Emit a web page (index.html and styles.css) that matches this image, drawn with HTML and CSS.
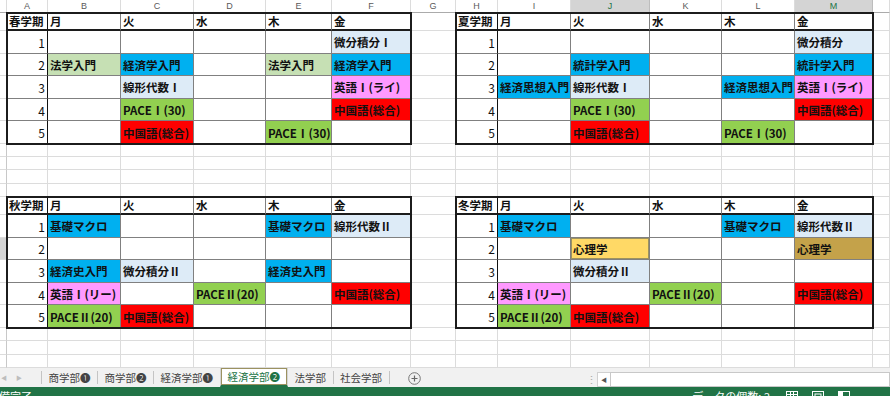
FILE: index.html
```html
<!DOCTYPE html>
<html lang="ja">
<head>
<meta charset="utf-8">
<title>時間割</title>
<link rel="stylesheet" href="styles.css">
</head>
<body>
<div class="app">
<div class="sheet">
  <!-- column header row -->
  <div class="ch"></div><div class="ch">A</div><div class="ch">B</div><div class="ch">C</div><div class="ch">D</div><div class="ch">E</div><div class="ch">F</div><div class="ch">G</div><div class="ch">H</div><div class="ch">I</div><div class="ch sel">J</div><div class="ch">K</div><div class="ch">L</div><div class="ch sel">M</div><div class="ch"></div>
  <!-- rows beside the upper tables -->
  <div class="rh"></div><div class="g"></div><div class="g"></div>
  <div class="rh"></div><div class="g"></div><div class="g"></div>
  <div class="rh"></div><div class="g"></div><div class="g"></div>
  <div class="rh"></div><div class="g"></div><div class="g"></div>
  <div class="rh"></div><div class="g"></div><div class="g"></div>
  <div class="rh"></div><div class="g"></div><div class="g"></div>
  <!-- empty rows -->
  <div class="rh"></div><div class="g"></div><div class="g"></div><div class="g"></div><div class="g"></div><div class="g"></div><div class="g"></div><div class="g"></div><div class="g"></div><div class="g"></div><div class="g"></div><div class="g"></div><div class="g"></div><div class="g"></div><div class="g"></div>
  <div class="rh"></div><div class="g"></div><div class="g"></div><div class="g"></div><div class="g"></div><div class="g"></div><div class="g"></div><div class="g"></div><div class="g"></div><div class="g"></div><div class="g"></div><div class="g"></div><div class="g"></div><div class="g"></div><div class="g"></div>
  <div class="rh"></div><div class="g"></div><div class="g"></div><div class="g"></div><div class="g"></div><div class="g"></div><div class="g"></div><div class="g"></div><div class="g"></div><div class="g"></div><div class="g"></div><div class="g"></div><div class="g"></div><div class="g"></div><div class="g"></div>
  <div class="rh"></div><div class="g"></div><div class="g"></div><div class="g"></div><div class="g"></div><div class="g"></div><div class="g"></div><div class="g"></div><div class="g"></div><div class="g"></div><div class="g"></div><div class="g"></div><div class="g"></div><div class="g"></div><div class="g"></div>
  <!-- rows beside the lower tables -->
  <div class="rh"></div><div class="g"></div><div class="g"></div>
  <div class="rh"></div><div class="g"></div><div class="g"></div>
  <div class="rh on"></div><div class="g"></div><div class="g"></div>
  <div class="rh"></div><div class="g"></div><div class="g"></div>
  <div class="rh"></div><div class="g"></div><div class="g"></div>
  <div class="rh"></div><div class="g"></div><div class="g"></div>
  <!-- empty rows -->
  <div class="rh"></div><div class="g"></div><div class="g"></div><div class="g"></div><div class="g"></div><div class="g"></div><div class="g"></div><div class="g"></div><div class="g"></div><div class="g"></div><div class="g"></div><div class="g"></div><div class="g"></div><div class="g"></div><div class="g"></div>
  <div class="rh"></div><div class="g"></div><div class="g"></div><div class="g"></div><div class="g"></div><div class="g"></div><div class="g"></div><div class="g"></div><div class="g"></div><div class="g"></div><div class="g"></div><div class="g"></div><div class="g"></div><div class="g"></div><div class="g"></div>
  <div class="rh"></div><div class="g"></div><div class="g"></div><div class="g"></div><div class="g"></div><div class="g"></div><div class="g"></div><div class="g"></div><div class="g"></div><div class="g"></div><div class="g"></div><div class="g"></div><div class="g"></div><div class="g"></div><div class="g"></div>

  <!-- 春学期 -->
  <div class="tt tl spring">
    <div class="c lab hd">春学期</div><div class="c hd">月</div><div class="c hd">火</div><div class="c hd">水</div><div class="c hd">木</div><div class="c hd">金</div>
    <div class="c lab num">1</div><div class="c"></div><div class="c"></div><div class="c"></div><div class="c"></div><div class="c lb">微分積分Ⅰ</div>
    <div class="c lab num">2</div><div class="c lg">法学入門</div><div class="c bl">経済学入門</div><div class="c"></div><div class="c lg">法学入門</div><div class="c bl">経済学入門</div>
    <div class="c lab num">3</div><div class="c"></div><div class="c lb">線形代数Ⅰ</div><div class="c"></div><div class="c"></div><div class="c pk">英語Ⅰ(ライ)</div>
    <div class="c lab num">4</div><div class="c"></div><div class="c gr">PACEⅠ(30)</div><div class="c"></div><div class="c"></div><div class="c rd">中国語(総合)</div>
    <div class="c lab num">5</div><div class="c"></div><div class="c rd">中国語(総合)</div><div class="c"></div><div class="c gr">PACEⅠ(30)</div><div class="c"></div>
  </div>

  <!-- 夏学期 -->
  <div class="tt tr summer">
    <div class="c lab hd">夏学期</div><div class="c hd">月</div><div class="c hd">火</div><div class="c hd">水</div><div class="c hd">木</div><div class="c hd">金</div>
    <div class="c lab num">1</div><div class="c"></div><div class="c"></div><div class="c"></div><div class="c"></div><div class="c lb">微分積分</div>
    <div class="c lab num">2</div><div class="c"></div><div class="c bl">統計学入門</div><div class="c"></div><div class="c"></div><div class="c bl">統計学入門</div>
    <div class="c lab num">3</div><div class="c bl">経済思想入門</div><div class="c lb">線形代数Ⅰ</div><div class="c"></div><div class="c bl">経済思想入門</div><div class="c pk">英語Ⅰ(ライ)</div>
    <div class="c lab num">4</div><div class="c"></div><div class="c gr">PACEⅠ(30)</div><div class="c"></div><div class="c"></div><div class="c rd">中国語(総合)</div>
    <div class="c lab num">5</div><div class="c"></div><div class="c rd">中国語(総合)</div><div class="c"></div><div class="c gr">PACEⅠ(30)</div><div class="c"></div>
  </div>

  <!-- 秋学期 -->
  <div class="tt tl autumn">
    <div class="c lab hd">秋学期</div><div class="c hd">月</div><div class="c hd">火</div><div class="c hd">水</div><div class="c hd">木</div><div class="c hd">金</div>
    <div class="c lab num">1</div><div class="c bl">基礎マクロ</div><div class="c"></div><div class="c"></div><div class="c bl">基礎マクロ</div><div class="c lb">線形代数Ⅱ</div>
    <div class="c lab num">2</div><div class="c"></div><div class="c"></div><div class="c"></div><div class="c"></div><div class="c"></div>
    <div class="c lab num">3</div><div class="c bl">経済史入門</div><div class="c lb">微分積分Ⅱ</div><div class="c"></div><div class="c bl">経済史入門</div><div class="c"></div>
    <div class="c lab num">4</div><div class="c pk">英語Ⅰ(リー)</div><div class="c"></div><div class="c gr">PACEⅡ(20)</div><div class="c"></div><div class="c rd">中国語(総合)</div>
    <div class="c lab num">5</div><div class="c gr">PACEⅡ(20)</div><div class="c rd">中国語(総合)</div><div class="c"></div><div class="c"></div><div class="c"></div>
  </div>

  <!-- 冬学期 -->
  <div class="tt tr winter">
    <div class="c lab hd">冬学期</div><div class="c hd">月</div><div class="c hd">火</div><div class="c hd">水</div><div class="c hd">木</div><div class="c hd">金</div>
    <div class="c lab num">1</div><div class="c bl">基礎マクロ</div><div class="c"></div><div class="c"></div><div class="c bl">基礎マクロ</div><div class="c lb">線形代数Ⅱ</div>
    <div class="c lab num">2</div><div class="c"></div><div class="c yl active">心理学</div><div class="c"></div><div class="c"></div><div class="c ol">心理学</div>
    <div class="c lab num">3</div><div class="c"></div><div class="c lb">微分積分Ⅱ</div><div class="c"></div><div class="c"></div><div class="c"></div>
    <div class="c lab num">4</div><div class="c pk">英語Ⅰ(リー)</div><div class="c"></div><div class="c gr">PACEⅡ(20)</div><div class="c"></div><div class="c rd">中国語(総合)</div>
    <div class="c lab num">5</div><div class="c gr">PACEⅡ(20)</div><div class="c rd">中国語(総合)</div><div class="c"></div><div class="c"></div><div class="c"></div>
  </div>
</div>

<div class="tabbar">
  <div class="nav"><span class="arr">&#9664;</span><span class="arr">&#9654;</span></div>
  <i class="sep"></i>
  <div class="tab">商学部❶</div>
  <i class="sep"></i>
  <div class="tab">商学部❷</div>
  <i class="sep"></i>
  <div class="tab">経済学部❶</div>
  <div class="tab active">経済学部❷</div>
  <div class="tab">法学部</div>
  <i class="sep"></i>
  <div class="tab">社会学部</div>
  <i class="sep"></i>
  <div class="add"><svg width="13" height="13" viewBox="0 0 13 13"><circle cx="6.5" cy="6.5" r="5.8" fill="none" stroke="#777" stroke-width="1"/><path d="M6.5 3.5v6M3.5 6.5h6" stroke="#666" stroke-width="1.2"/></svg></div>
  <div class="hscroll">
    <span class="dots">&#8942;</span>
    <span class="sbtn">&#9664;</span>
    <span class="track"></span>
  </div>
</div>

<div class="status">
  <span class="ready">準備完了</span>
  <span class="count">データの個数: 2</span>
  <span class="views">
    <svg width="12" height="10" viewBox="0 0 12 10"><rect x="0.5" y="0.5" width="11" height="9" fill="none" stroke="#fff"/><path d="M0.5 3.5h11M4.5 0.5v9M7.5 0.5v9" stroke="#fff"/></svg>
    <svg width="12" height="10" viewBox="0 0 12 10"><rect x="0.5" y="0.5" width="11" height="9" fill="none" stroke="#fff"/><rect x="3" y="3" width="6" height="6" fill="none" stroke="#fff"/></svg>
    <svg width="12" height="10" viewBox="0 0 12 10"><rect x="0.5" y="0.5" width="11" height="9" fill="none" stroke="#fff"/><rect x="1" y="1" width="4" height="8" fill="#fff"/></svg>
  </span>
  <span class="minus">&#8211;</span>
</div>
</div>
</body>
</html>
```

FILE: styles.css
```css
* { box-sizing: border-box; }

html, body {
  margin: 0;
  padding: 0;
  background: #fff;
}

body {
  width: 890px;
  height: 396px;
  overflow: hidden;
  font-family: "Noto Sans CJK JP", "Noto Sans", sans-serif;
}

.app {
  display: flex;
  flex-direction: column;
  width: 890px;
}

/* ---------- sheet grid ---------- */
.sheet {
  display: grid;
  grid-template-columns: 7px 41px 73px 73px 72px 66px 79px 45px 42px 73px 79px 72px 73px 78px 1fr;
  grid-template-rows: 13px 18px repeat(5, 22.6px) repeat(4, 13.25px) 18px repeat(5, 22.6px) repeat(3, 13.34px);
  height: 368px;
}

.ch {
  display: flex;
  align-items: center;
  justify-content: center;
  font: 400 9px "Liberation Sans", Arial, sans-serif;
  color: #5a5a5a;
  background: #fff;
  border-right: 1px solid #dcdcdc;
  border-bottom: 1px solid #ababab;
}
.ch.sel {
  background: #d4d4d4;
  color: #217346;
  border-right-color: #bdbdbd;
}

.rh {
  background: #fff;
  border-right: 1px solid #c8c8c8;
  border-bottom: 1px solid #dcdcdc;
}
.rh.on { background: #d4d4d4; }

.g {
  background: #fff;
  border-right: 1px solid #dcdcdc;
  border-bottom: 1px solid #dcdcdc;
}

/* ---------- timetables ---------- */
.tt {
  display: grid;
  grid-template-rows: 18px repeat(5, 1fr);
  background: #fff;
  outline: 2px solid #1c1c1c;
  outline-offset: -1px;
}
.tl { grid-template-columns: 41px 73px 73px 72px 66px 79px; }
.tr { grid-template-columns: 42px 73px 79px 72px 73px 78px; }

.spring { grid-column: 2 / 8;  grid-row: 2 / 8; }
.summer { grid-column: 9 / 15; grid-row: 2 / 8; }
.autumn { grid-column: 2 / 8;  grid-row: 12 / 18; }
.winter { grid-column: 9 / 15; grid-row: 12 / 18; }

.c {
  display: flex;
  align-items: center;
  min-width: 0;
  padding: 1px 0 0 2px;
  font-size: 11.5px;
  font-weight: 700;
  color: #111;
  white-space: nowrap;
  overflow: hidden;
  border-right: 1px solid #808080;
  border-bottom: 1px solid #808080;
}
.c.hd { border-bottom: 2px solid #1c1c1c; padding-top: 0; }
.c.lab { border-right: 1px solid #111; }
.c.num {
  justify-content: flex-end;
  padding-right: 2px;
  font-weight: 400;
  font-size: 12px;
}

.lg { background: #c6e0b4; }
.bl { background: #00b0f0; }
.lb { background: #ddebf7; }
.gr { background: #92d050; }
.rd { background: #ff0000; }
.pk { background: #ff99ff; }
.yl { background: #ffd966; }
.ol { background: #c4a24a; }
.active { box-shadow: inset 0 0 0 1px #9c9260; }

/* ---------- sheet tabs ---------- */
.tabbar {
  display: flex;
  align-items: center;
  height: 19px;
  background: #f1f1f1;
  font-size: 10.5px;
  color: #444;
}
.nav {
  display: flex;
  align-items: center;
  gap: 9px;
  width: 41px;
  padding-left: 1px;
}
.arr {
  font-size: 6px;
  color: #bdbdbd;
}
.sep {
  width: 1px;
  height: 13px;
  background: #c4c4c4;
}
.tab {
  padding: 0 6.5px;
  line-height: 19px;
  white-space: nowrap;
}
.tab.active {
  align-self: stretch;
  padding: 0 7px;
  background: #fff;
  color: #217346;
  border-left: 1px solid #d4d4d4;
  border-right: 1px solid #d4d4d4;
  border-bottom: 2px solid #217346;
  line-height: 17px;
}
.add {
  display: flex;
  margin-left: 18px;
  margin-top: 2px;
}
.hscroll {
  display: flex;
  align-items: stretch;
  align-self: flex-end;
  margin-left: auto;
  width: 304px;
  height: 15px;
}
.dots {
  width: 11px;
  text-align: center;
  color: #aaa;
  font-size: 11px;
  line-height: 14px;
}
.sbtn {
  width: 13px;
  background: #fff;
  border: 1px solid #d0d0d0;
  border-right: none;
  color: #555;
  font-size: 6px;
  display: flex;
  align-items: center;
  justify-content: center;
}
.track {
  flex: 1;
  background: #fff;
  border: 1px solid #c8c8c8;
}

/* ---------- status bar ---------- */
.status {
  display: flex;
  align-items: flex-start;
  height: 26px;
  background: #217346;
  color: #fff;
  font-size: 11px;
  line-height: 14px;
  padding-top: 2px;
}
.ready { margin-left: -12px; }
.count { margin-left: auto; }
.views {
  display: flex;
  gap: 14px;
  margin-left: 16px;
  padding-top: 2px;
}
.minus {
  margin-left: 10px;
  width: 30px;
}
```
